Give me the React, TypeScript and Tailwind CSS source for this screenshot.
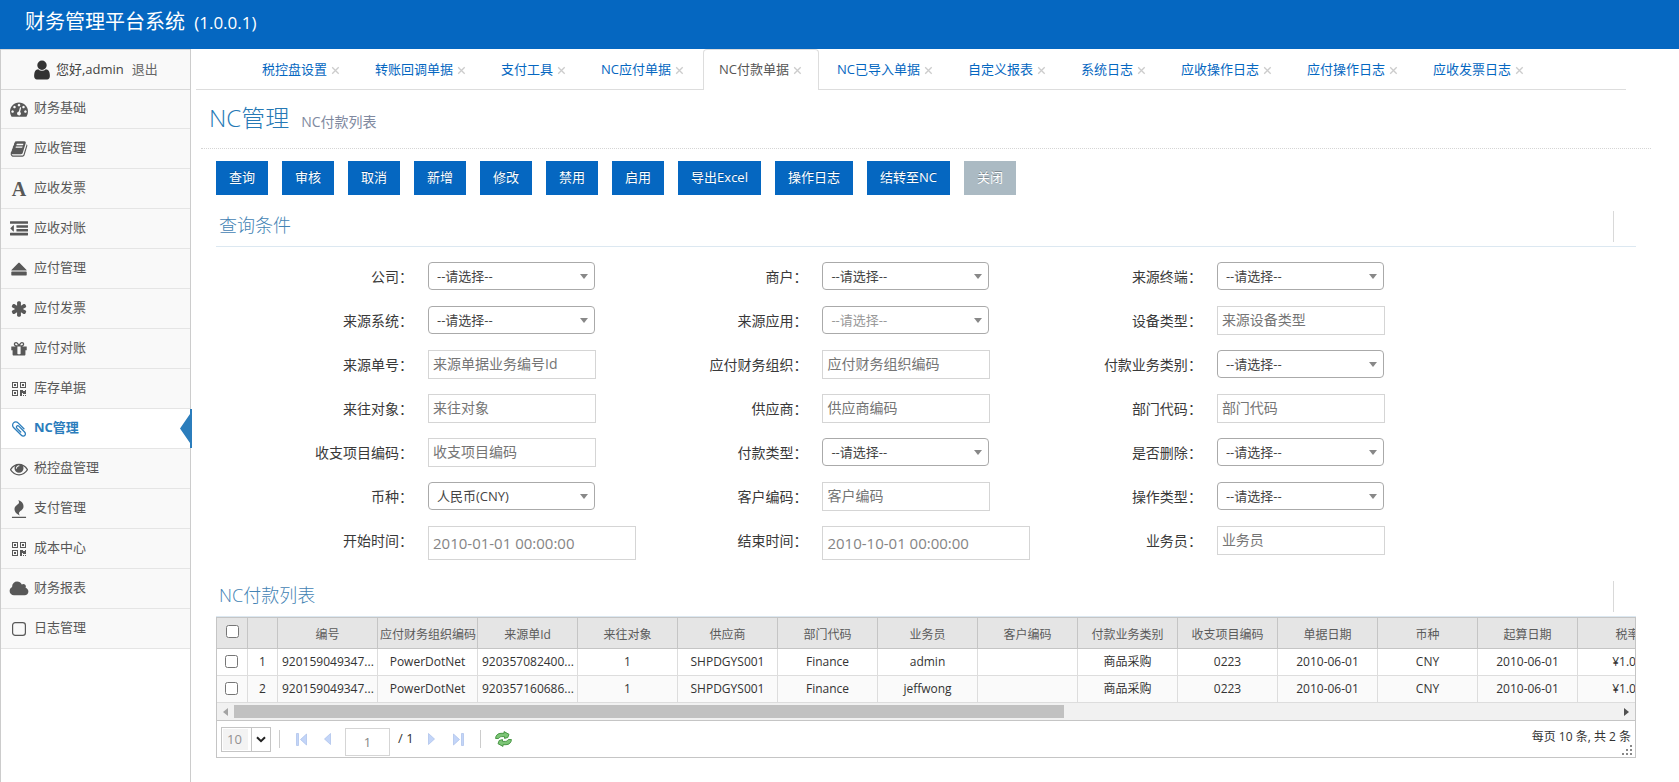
import { ReactNode } from "react";

type MenuItem = { label: string; icon: ReactNode; active?: boolean };
type Field = { id: string; label: string; kind: "select" | "text" | "date"; value: string; disabled?: boolean };

const Glyph = ({ d, size = 18 }: { d: string; size?: number }) => (
  <svg width={size} height={size} viewBox="0 0 1792 1792" fill="currentColor" aria-hidden="true">
    <path d={d} />
  </svg>
);

const userPath =
  "M1536 1399q0 109-62.5 187t-150.5 78h-854q-88 0-150.5-78t-62.5-187q0-85 8.5-160.5t31.5-152 58.5-131 94-89 134.5-34.5q131 128 313 128t313-128q76 0 134.5 34.5t94 89 58.5 131 31.5 152 8.5 160.5zm-256-887q0 159-112.5 271.5t-271.5 112.5-271.5-112.5-112.5-271.5 112.5-271.5 271.5-112.5 271.5 112.5 112.5 271.5z";

const dashboardPath =
  "M384 1152q0-53-37.5-90.5t-90.5-37.5-90.5 37.5-37.5 90.5 37.5 90.5 90.5 37.5 90.5-37.5 37.5-90.5zm192-448q0-53-37.5-90.5t-90.5-37.5-90.5 37.5-37.5 90.5 37.5 90.5 90.5 37.5 90.5-37.5 37.5-90.5zm428 481l101-382q6-26-7.5-48.5t-38.5-29.5-48 6.5-30 39.5l-101 382q-60 5-107 43.5t-63 98.5q-20 77 20 146t117 89 146-20 89-117q16-60-6-117t-72-91zm660-33q0-53-37.5-90.5t-90.5-37.5-90.5 37.5-37.5 90.5 37.5 90.5 90.5 37.5 90.5-37.5 37.5-90.5zm-640-640q0-53-37.5-90.5t-90.5-37.5-90.5 37.5-37.5 90.5 37.5 90.5 90.5 37.5 90.5-37.5 37.5-90.5zm448 192q0-53-37.5-90.5t-90.5-37.5-90.5 37.5-37.5 90.5 37.5 90.5 90.5 37.5 90.5-37.5 37.5-90.5zm320 448q0 261-141 483-19 29-54 29h-1402q-35 0-54-29-141-221-141-483 0-182 71-348t191-286 286-191 348-71 348 71 286 191 191 286 71 348z";

const bookPath =
  "M1703 478q40 57 18 129l-275 906q-19 64-76.5 107.5t-122.5 43.5h-923q-77 0-148.5-53.5t-99.5-131.5q-24-67-2-127 0-4 3-27t4-37q1-8-3-21.5t-3-19.5q2-11 8-21t16.5-23.5 16.5-23.5q23-38 45-91.5t30-91.5q3-10 .5-30t-.5-28q3-11 17-28t17-23q21-36 42-92t25-90q1-9-2.5-32t.5-28q4-13 22-30.5t22-22.5q19-26 42.5-84.5t27.5-96.5q1-8-3-25.5t-2-26.5q2-8 9-18t18-23 17-21q8-12 16.5-30.5t15-35 16-36 19.5-32 26.5-23.5 36-11.5 47.5 5.5l-1 3q38-9 51-9h761q74 0 114 56t18 130l-274 906q-36 119-71.5 153.5t-128.5 34.5h-869q-27 0-38 15-11 16-1 43 24 70 144 70h923q29 0 56-15.5t35-41.5l300-987q7-22 5-57 38 15 59 43zm-1064 2q-4 13 2 22.5t20 9.5h608q13 0 25.5-9.5t16.5-22.5l21-64q4-13-2-22.5t-20-9.5h-608q-13 0-25.5 9.5t-16.5 22.5zm-83 256q-4 13 2 22.5t20 9.5h608q13 0 25.5-9.5t16.5-22.5l21-64q4-13-2-22.5t-20-9.5h-608q-13 0-25.5 9.5t-16.5 22.5z";

const outdentPath =
  "M384 544v576q0 13-9.5 22.5t-22.5 9.5q-14 0-23-9l-288-288q-9-9-9-23t9-23l288-288q9-9 23-9 13 0 22.5 9.5t9.5 22.5zm1408 768v192q0 13-9.5 22.5t-22.5 9.5h-1728q-13 0-22.5-9.5t-9.5-22.5v-192q0-13 9.5-22.5t22.5-9.5h1728q13 0 22.5 9.5t9.5 22.5zm0-384v192q0 13-9.5 22.5t-22.5 9.5h-1088q-13 0-22.5-9.5t-9.5-22.5v-192q0-13 9.5-22.5t22.5-9.5h1088q13 0 22.5 9.5t9.5 22.5zm0-384v192q0 13-9.5 22.5t-22.5 9.5h-1088q-13 0-22.5-9.5t-9.5-22.5v-192q0-13 9.5-22.5t22.5-9.5h1088q13 0 22.5 9.5t9.5 22.5zm0-384v192q0 13-9.5 22.5t-22.5 9.5h-1728q-13 0-22.5-9.5t-9.5-22.5v-192q0-13 9.5-22.5t22.5-9.5h1728q13 0 22.5 9.5t9.5 22.5z";

const ejectPath =
  "M142 991l709-710q19-19 45-19t45 19l709 710q19 19 13 32t-32 13h-1472q-26 0-32-13t13-32zm1459 545h-1408q-26 0-45-19t-19-45v-256q0-26 19-45t45-19h1408q26 0 45 19t19 45v256q0 26-19 45t-45 19z";

const asteriskPath =
  "M1546 1050q46 26 59.5 77.5t-12.5 97.5l-64 110q-26 46-77.5 59.5t-97.5-12.5l-266-153v307q0 52-38 90t-90 38h-128q-52 0-90-38t-38-90v-307l-266 153q-46 26-97.5 12.5t-77.5-59.5l-64-110q-26-46-12.5-97.5t59.5-77.5l266-154-266-154q-46-26-59.5-77.5t12.5-97.5l64-110q26-46 77.5-59.5t97.5 12.5l266 153v-307q0-52 38-90t90-38h128q52 0 90 38t38 90v307l266-153q46-26 97.5-12.5t77.5 59.5l64 110q26 46 12.5 97.5t-59.5 77.5l-266 154z";

const giftPath =
  "M1056 1356v-716h-320v716q0 25 18 38.5t46 13.5h192q28 0 46-13.5t18-38.5zm-456-844h195l-126-161q-26-31-69-31-40 0-68 28t-28 68 28 68 68 28zm688-96q0-40-28-68t-68-28q-43 0-69 31l-125 161h194q40 0 68-28t28-68zm376 256v320q0 14-9 23t-23 9h-96v416q0 40-28 68t-68 28h-1088q-40 0-68-28t-28-68v-416h-96q-14 0-23-9t-9-23v-320q0-14 9-23t23-9h440q-93 0-158.5-65.5t-65.5-158.5 65.5-158.5 158.5-65.5q107 0 168 77l128 165 128-165q61-77 168-77 93 0 158.5 65.5t65.5 158.5-65.5 158.5-158.5 65.5h440q14 0 23 9t9 23z";

const paperclipPath =
  "M1596 1385q0 117-79 196t-196 79q-135 0-235-100l-777-776q-113-115-113-271 0-159 110-270t269-111q158 0 273 113l605 606q10 10 10 22 0 16-30.5 46.5t-46.5 30.5q-13 0-23-10l-606-607q-79-77-181-77-106 0-179 75t-73 181q0 105 76 181l776 777q63 63 145 63 64 0 106-42t42-106q0-82-63-145l-581-581q-26-24-60-24-29 0-48 19t-19 48q0 32 25 59l410 410q10 10 10 22 0 16-31 47t-47 31q-12 0-22-10l-410-410q-63-61-63-149 0-82 57-139t139-57q88 0 149 63l581 581q100 98 100 235z";

const eyePath =
  "M1664 960q-152-236-381-353 61 104 61 225 0 185-131.5 316.5t-316.5 131.5-316.5-131.5-131.5-316.5q0-121 61-225-229 117-381 353 133 205 333.5 326.5t434.5 121.5 434.5-121.5 333.5-326.5zm-720-384q0-20-14-34t-34-14q-125 0-214.5 89.5t-89.5 214.5q0 20 14 34t34 14 34-14 14-34q0-86 61-147t147-61q20 0 34-14t14-34zm848 384q0 34-20 69-140 230-376.5 368.5t-499.5 138.5-499.5-139-376.5-368q-20-35-20-69t20-69q140-229 376.5-368t499.5-139 499.5 139 376.5 368q20 35 20 69z";

const firePath =
  "M1600 1696v64q0 13-9.5 22.5t-22.5 9.5h-1344q-13 0-22.5-9.5t-9.5-22.5v-64q0-13 9.5-22.5t22.5-9.5h1344q13 0 22.5 9.5t9.5 22.5zm-256-1056q0 78-24.5 144t-64 112.5-87.5 88-96 77.5-87.5 72-64 81.5-24.5 96.5q0 96 67 224l-4-1 1 1q-90-41-160-83t-138.5-100-113.5-122.5-72.5-150.5-27.5-184q0-78 24.5-144t64-112.5 87.5-88 96-77.5 87.5-72 64-81.5 24.5-96.5q0-94-66-224l3 1-1-1q90 41 160 83t138.5 100 113.5 122.5 72.5 150.5 27.5 184z";

const QrIcon = () => (
  <svg width="14" height="14" viewBox="0 0 14 14" fill="currentColor" aria-hidden="true">
    <path fillRule="evenodd" d="M0 0h6v6H0zM1 1v4h4V1zM8 0h6v6H8zM9 1v4h4V1zM0 8h6v6H0zM1 9v4h4V9z" />
    <path d="M2 2h2v2H2zM10 2h2v2h-2zM2 10h2v2H2zM8 8h3v1h2V8h1v4h-3v-1h-1v3H8zM11 13h1v1h-1zM13 13h1v1h-1z" />
  </svg>
);

const CloudIcon = () => (
  <svg width="20" height="18" viewBox="0 0 2048 1792" fill="currentColor" aria-hidden="true">
    <path d="M1984 1152q0 159-112.5 271.5t-271.5 112.5h-1088q-185 0-316.5-131.5t-131.5-316.5q0-132 71-241.5t187-163.5q-2-28-2-43 0-212 150-362t362-150q158 0 286.5 88t187.5 230q70-62 166-62 106 0 181 75t75 181q0 75-41 138 129 30 213 134.5t84 239.5z" />
  </svg>
);

const SquareIcon = () => (
  <svg width="14" height="14" viewBox="0 0 14 14" fill="none" stroke="currentColor" aria-hidden="true">
    <rect x="0.6" y="0.6" width="12.8" height="12.8" rx="2.6" strokeWidth="1.2" />
  </svg>
);

const FontIcon = () => (
  <span aria-hidden="true" className="font-['Liberation_Serif',serif] text-xl leading-5 font-bold">A</span>
);

const menu: MenuItem[] = [
  { label: "财务基础", icon: <Glyph d={dashboardPath} /> },
  { label: "应收管理", icon: <Glyph d={bookPath} /> },
  { label: "应收发票", icon: <FontIcon /> },
  { label: "应收对账", icon: <Glyph d={outdentPath} /> },
  { label: "应付管理", icon: <Glyph d={ejectPath} /> },
  { label: "应付发票", icon: <Glyph d={asteriskPath} /> },
  { label: "应付对账", icon: <Glyph d={giftPath} /> },
  { label: "库存单据", icon: <QrIcon /> },
  { label: "NC管理", icon: <Glyph d={paperclipPath} />, active: true },
  { label: "税控盘管理", icon: <Glyph d={eyePath} /> },
  { label: "支付管理", icon: <Glyph d={firePath} /> },
  { label: "成本中心", icon: <QrIcon /> },
  { label: "财务报表", icon: <CloudIcon /> },
  { label: "日志管理", icon: <SquareIcon /> },
];

const tabs = [
  "税控盘设置", "转账回调单据", "支付工具", "NC应付单据", "NC付款单据", "NC已导入单据",
  "自定义报表", "系统日志", "应收操作日志", "应付操作日志", "应收发票日志",
];

const actions = ["查询", "审核", "取消", "新增", "修改", "禁用", "启用", "导出Excel", "操作日志", "结转至NC"];

const fields: Field[] = [
  { id: "company", label: "公司", kind: "select", value: "--请选择--" },
  { id: "merchant", label: "商户", kind: "select", value: "--请选择--" },
  { id: "terminal", label: "来源终端", kind: "select", value: "--请选择--" },
  { id: "system", label: "来源系统", kind: "select", value: "--请选择--" },
  { id: "application", label: "来源应用", kind: "select", value: "--请选择--", disabled: true },
  { id: "device", label: "设备类型", kind: "text", value: "来源设备类型" },
  { id: "sourceNo", label: "来源单号", kind: "text", value: "来源单据业务编号Id" },
  { id: "payOrg", label: "应付财务组织", kind: "text", value: "应付财务组织编码" },
  { id: "payCategory", label: "付款业务类别", kind: "select", value: "--请选择--" },
  { id: "partner", label: "来往对象", kind: "text", value: "来往对象" },
  { id: "supplier", label: "供应商", kind: "text", value: "供应商编码" },
  { id: "department", label: "部门代码", kind: "text", value: "部门代码" },
  { id: "budgetItem", label: "收支项目编码", kind: "text", value: "收支项目编码" },
  { id: "payType", label: "付款类型", kind: "select", value: "--请选择--" },
  { id: "deleted", label: "是否删除", kind: "select", value: "--请选择--" },
  { id: "currency", label: "币种", kind: "select", value: "人民币(CNY)" },
  { id: "customer", label: "客户编码", kind: "text", value: "客户编码" },
  { id: "operation", label: "操作类型", kind: "select", value: "--请选择--" },
  { id: "startTime", label: "开始时间", kind: "date", value: "2010-01-01 00:00:00" },
  { id: "endTime", label: "结束时间", kind: "date", value: "2010-10-01 00:00:00" },
  { id: "salesman", label: "业务员", kind: "text", value: "业务员" },
];

const columns = [
  "编号", "应付财务组织编码", "来源单Id", "来往对象", "供应商", "部门代码", "业务员",
  "客户编码", "付款业务类别", "收支项目编码", "单据日期", "币种", "起算日期", "税率",
];

const rows = [
  ["920159049347...", "PowerDotNet", "920357082400...", "1", "SHPDGYS001", "Finance", "admin", "", "商品采购", "0223", "2010-06-01", "CNY", "2010-06-01", "¥1.00"],
  ["920159049347...", "PowerDotNet", "920357160686...", "1", "SHPDGYS001", "Finance", "jeffwong", "", "商品采购", "0223", "2010-06-01", "CNY", "2010-06-01", "¥1.00"],
];

function FieldControl({ field }: { field: Field }) {
  if (field.kind === "select") {
    return (
      <div className="relative h-7 w-[167px] shrink-0">
        <select
          id={field.id}
          disabled={field.disabled}
          className="h-7 w-full appearance-none rounded border border-[#aaa] bg-white pl-2 pr-6 pt-[2px] text-[13px] text-[#444] disabled:text-[#999] disabled:opacity-100"
        >
          <option>{field.value}</option>
        </select>
        <svg className="pointer-events-none absolute right-[7px] top-3" width="8" height="5" viewBox="0 0 8 5" fill="#888" aria-hidden="true">
          <path d="M0 0h8L4 5z" />
        </svg>
      </div>
    );
  }
  if (field.kind === "date") {
    return (
      <input
        id={field.id}
        type="text"
        defaultValue={field.value}
        className="h-[34px] w-[208px] shrink-0 border border-[#d5d5d5] bg-white px-1 text-[15px] text-[#858585]"
      />
    );
  }
  return (
    <input
      id={field.id}
      type="text"
      placeholder={field.value}
      className="h-[29px] w-[168px] shrink-0 border border-[#d5d5d5] bg-white px-1 pb-[2px] text-sm text-[#858585] placeholder:text-[#757575]"
    />
  );
}

function SectionTitle({ children }: { children: ReactNode }) {
  return (
    <div className="border-b border-[#dce8f1] pb-1 pl-[3px] pr-[22px]">
      <h2 className="border-r border-[#d9d9d9] pb-[2px] text-lg leading-[29px] font-light text-[#4383b4]">{children}</h2>
    </div>
  );
}

function Sidebar() {
  return (
    <aside className="w-[191px] shrink-0 border-x border-[#ccc]">
      <div className="flex h-[41px] items-center border-y border-[#d8d8d8] bg-[#f9f9f9] pl-[30px] text-[#444]">
        <span className="text-[#333]">
          <Glyph d={userPath} size={22} />
        </span>
        <span className="ml-[3px] text-[13px]">您好,admin</span>
        <a href="#logout" className="ml-2 text-[13px] text-[#666]">退出</a>
      </div>
      <ul>
        {menu.map((item) => (
          <li
            key={item.label}
            className={
              item.active
                ? "relative h-10 border-b border-[#e5e5e5] bg-white"
                : "h-10 border-b border-[#e5e5e5] bg-[#f9f9f9] first:h-[39px]"
            }
          >
            <a
              href="#menu"
              className={
                item.active
                  ? "flex h-full items-center text-[13px] font-bold text-[#2b7dbc]"
                  : "flex h-full items-center text-[13px] text-[#585858]"
              }
            >
              <span className="ml-2 flex w-5 shrink-0 justify-center">{item.icon}</span>
              <span className="ml-[5px] pb-[2px]">{item.label}</span>
            </a>
            {item.active && (
              <svg className="absolute -right-[2px] top-0 h-full w-3" viewBox="0 0 12 39" preserveAspectRatio="none" fill="#2b7dbc" aria-hidden="true">
                <path d="M12 0v39h-2v-5L0 19.500 10 5V0z" />
              </svg>
            )}
          </li>
        ))}
      </ul>
    </aside>
  );
}

function TabBar() {
  return (
    <ul className="ml-[5px] mr-[53px] flex border-b border-[#ddd] pl-[50px]">
      {tabs.map((tab) => {
        const active = tab === "NC付款单据";
        return (
          <li
            key={tab}
            className={
              active
                ? "-mb-px mr-[2px] flex h-[41px] items-center rounded-t border border-b-0 border-[#ddd] bg-white pl-[15px] pr-4"
                : "mr-[2px] flex h-[41px] items-center border-x border-transparent pl-[15px] pr-4 -mb-px"
            }
          >
            <a href="#tab" className={active ? "text-[13px] text-[#555]" : "text-[13px] text-[#0567c1]"}>{tab}</a>
            <button type="button" aria-label={`关闭${tab}`} className="ml-1 text-[#ccc]">
              <svg width="9" height="9" viewBox="0 0 9 9" fill="none" stroke="currentColor" strokeWidth="1.300" className="mt-px">
                <path d="M1.200 1.200l6.500 6.500M7.700 1.200l-6.500 6.500" />
              </svg>
            </button>
          </li>
        );
      })}
    </ul>
  );
}

function Pager() {
  return (
    <div className="relative flex h-[37px] items-center border-t border-[#c5c5c5] pl-1 text-[#333]">
      <div className="relative flex h-[25px] w-[50px] border border-[#c5c5c5] p-px">
        <select aria-label="每页条数" className="h-[21px] w-[25px] appearance-none bg-[#f3f3f3] pl-1 text-[13px] leading-5 text-[#939192]">
          <option>10</option>
        </select>
        <span className="pointer-events-none absolute inset-y-0 right-0 flex w-[19px] items-center justify-center border-l border-[#c5c5c5]">
          <svg width="10" height="7" viewBox="0 0 10 7" fill="none" stroke="#222" strokeWidth="2" aria-hidden="true">
            <path d="M1 1.200l4 4 4-4" />
          </svg>
        </span>
      </div>
      <span className="ml-2 h-[18px] w-px bg-[#ccc]" />
      <button type="button" aria-label="首页" className="ml-4">
        <svg width="11" height="13" viewBox="0 0 11 13" fill="#c3d5f8" stroke="#a9bfea" strokeWidth="0.700">
          <path d="M.5.5h2v12h-2zM10.500 1v11L4.500 6.500z" />
        </svg>
      </button>
      <button type="button" aria-label="上一页" className="ml-[17px]">
        <svg width="7" height="12" viewBox="0 0 7 12" fill="#c3d5f8" stroke="#a9bfea" strokeWidth="0.700">
          <path d="M6.500.5v11L.5 6z" />
        </svg>
      </button>
      <input aria-label="页码" defaultValue="1" className="ml-[14px] mt-[5px] h-7 w-[45px] border border-[#d5d5d5] text-center text-[13px] text-[#858585]" />
      <span className="ml-2 text-[13px]">/ 1</span>
      <button type="button" aria-label="下一页" className="ml-[14px]">
        <svg width="7" height="12" viewBox="0 0 7 12" fill="#c3d5f8" stroke="#a9bfea" strokeWidth="0.700">
          <path d="M.5.5v11l6-5.500z" />
        </svg>
      </button>
      <button type="button" aria-label="末页" className="ml-[18px]">
        <svg width="11" height="13" viewBox="0 0 11 13" fill="#c3d5f8" stroke="#a9bfea" strokeWidth="0.700">
          <path d="M8.500.5h2v12h-2zM.5 1v11l6-5.500z" />
        </svg>
      </button>
      <span className="ml-4 h-[18px] w-px bg-[#ccc]" />
      <button type="button" aria-label="刷新" className="ml-[14px]">
        <svg width="17" height="16" viewBox="0 0 17 16" fill="#7cc576" stroke="#3f8f3c" strokeWidth="0.900" strokeLinejoin="round">
          <path d="M.6 7.500C.6 4.300 3 2.300 6 2.300h3V.6l5 2.700-1.200 3.200-3.300.9V5.600H6.600C4.600 5.600 3.600 7.500 3.600 7.500z" />
          <path d="M16.400 8.500c0 3.200-2.400 5.200-5.400 5.200H8v1.700l-5-2.700 1.200-3.200 3.300-.9v1.800h2.900c2 0 3-1.900 3-1.900z" />
        </svg>
      </button>
      <span className="ml-auto pb-1 pr-1 text-xs">每页 10 条, 共 2 条</span>
      <svg className="absolute bottom-[2px] right-[3px]" width="10" height="10" viewBox="0 0 10 10" fill="#888" aria-hidden="true">
        <path d="M8 0h2v2H8zM4 4h2v2H4zM8 4h2v2H8zM0 8h2v2H0zM4 8h2v2H4zM8 8h2v2H8z" />
      </svg>
    </div>
  );
}

function PaymentTable() {
  return (
    <div className="border border-[#c5c5c5]">
      <div className="overflow-hidden">
        <table className="w-[1461px] table-fixed border-separate border-spacing-0 text-center text-xs">
          <colgroup>
            <col className="w-[31px]" />
            <col className="w-[30px]" />
            {columns.map((c) => (
              <col key={c} className="w-[100px]" />
            ))}
          </colgroup>
          <thead>
            <tr className="h-[31px] bg-[#e5e5e5] text-[#5b5b5b]">
              <th className="border-b border-r border-[#c5c5c5] p-0 font-normal">
                <input type="checkbox" aria-label="全选" className="mx-auto mb-1 block" />
              </th>
              <th className="border-b border-r border-[#c5c5c5]" />
              {columns.map((c) => (
                <th key={c} className="overflow-hidden whitespace-nowrap border-b border-r border-[#c5c5c5] px-[2px] pb-0 pt-1 font-normal">{c}</th>
              ))}
            </tr>
          </thead>
          <tbody>
            {rows.map((row, i) => (
              <tr key={i} className="h-[27px] text-[#333] even:bg-[#fafafa]">
                <td className="border-b border-r border-[#ddd] p-0 pr-[2px]">
                  <input type="checkbox" aria-label={`选择第${i + 1}行`} className="mx-auto mb-px block" />
                </td>
                <td className="border-b border-r border-[#ddd] p-0">{i + 1}</td>
                {row.map((cell, j) => (
                  <td key={j} className="overflow-hidden whitespace-nowrap border-b border-r border-[#ddd] px-1 py-0">{cell}</td>
                ))}
              </tr>
            ))}
          </tbody>
        </table>
      </div>

      {/* horizontal scrollbar */}
      <div className="flex h-[17px] items-center bg-[#f1f1f1]">
        <svg className="mx-[6px] shrink-0" width="5" height="8" viewBox="0 0 5 8" fill="#a3a3a3" aria-hidden="true">
          <path d="M5 0v8L0 4z" />
        </svg>
        <div className="flex-1">
          <div className="h-[13px] w-3/5 bg-[#c1c1c1]" />
        </div>
        <svg className="mx-[6px] shrink-0" width="5" height="8" viewBox="0 0 5 8" fill="#505050" aria-hidden="true">
          <path d="M0 0v8l5-4z" />
        </svg>
      </div>

      <Pager />
    </div>
  );
}

export default function App() {
  return (
    <div className="flex min-h-screen flex-col bg-white font-['Open_Sans','Noto_Sans_CJK_SC',sans-serif] text-[#393939]">
      <header className="flex h-[49px] shrink-0 items-start bg-[#0567c1] pl-[25px] pt-[6px] text-white">
        <h1 className="text-xl leading-8">
          财务管理平台系统 <span className="ml-1 text-[17px]">(1.0.0.1)</span>
        </h1>
      </header>

      <div className="flex flex-1">
        <Sidebar />

        <main className="min-w-0 flex-1">
          <TabBar />

          <div className="ml-[10px] mr-7 flex h-[59px] items-baseline border-b border-dotted border-[#d5d5d5] pl-2 pt-2">
            <h1 className="text-2xl leading-10 font-light text-[#2679b5]">NC管理</h1>
            <small className="ml-3 text-sm text-[#8089a0]">NC付款列表</small>
          </div>

          <div className="ml-[25px] mr-[43px]">
            <div className="mt-3 flex gap-[14px]">
              {actions.map((a) => (
                <button key={a} type="button" className="h-[34px] bg-[#0567c1] px-[13px] text-[13px] text-white text-shadow-[0_-1px_0_rgba(0,0,0,0.25)]">
                  {a}
                </button>
              ))}
              <button type="button" className="h-[34px] bg-[#abbac3] px-[13px] text-[13px] text-white text-shadow-[0_-1px_0_rgba(0,0,0,0.25)]">
                关闭
              </button>
            </div>

            <div className="mt-4">
              <SectionTitle>查询条件</SectionTitle>
            </div>

            <form className="mt-[15px] grid w-5/6 grid-cols-3">
              {fields.map((field) => (
                <div key={field.id} className="flex h-11 items-start gap-[15px]">
                  <label htmlFor={field.id} className="w-[197px] shrink-0 text-right text-sm leading-[30px]">{field.label}：</label>
                  <FieldControl field={field} />
                </div>
              ))}
            </form>

            <div className="mt-[11px]">
              <SectionTitle>NC付款列表</SectionTitle>
              <PaymentTable />
            </div>
          </div>
        </main>
      </div>
    </div>
  );
}
